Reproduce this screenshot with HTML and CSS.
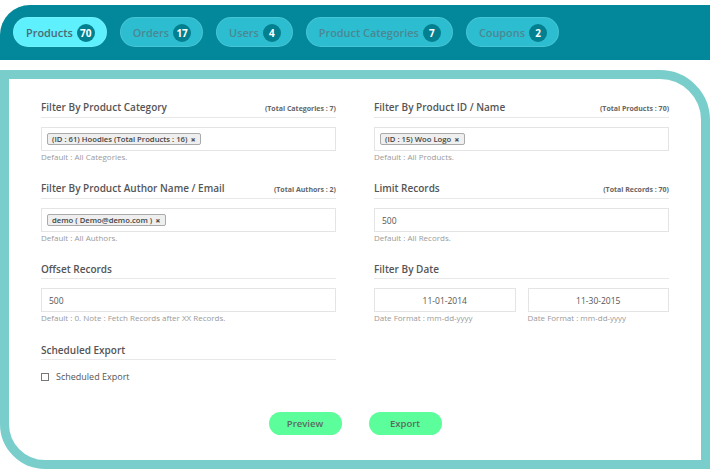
FILE: index.html
```html
<!DOCTYPE html>
<html>
<head>
<meta charset="utf-8">
<link rel="stylesheet" href="styles.css">
</head>
<body>
<div class="topbar">
  <div class="tab active">Products <span class="badge">70</span></div>
  <div class="tab">Orders <span class="badge">17</span></div>
  <div class="tab">Users <span class="badge">4</span></div>
  <div class="tab">Product Categories <span class="badge">7</span></div>
  <div class="tab">Coupons <span class="badge">2</span></div>
</div>
<div class="card">
  <div class="grid">
    <div class="section">
      <div class="title"><span>Filter By Product Category</span><span class="total">(Total Categories : 7)</span></div>
      <div class="input"><span class="tag">(ID : 61) Hoodies (Total Products : 16) <b>×</b></span></div>
      <div class="help">Default : All Categories.</div>
    </div>
    <div class="section">
      <div class="title"><span>Filter By Product ID / Name</span><span class="total">(Total Products : 70)</span></div>
      <div class="input"><span class="tag">(ID : 15) Woo Logo <b>×</b></span></div>
      <div class="help">Default : All Products.</div>
    </div>
    <div class="section">
      <div class="title"><span>Filter By Product Author Name / Email</span><span class="total">(Total Authors : 2)</span></div>
      <div class="input"><span class="tag">demo ( Demo@demo.com ) <b>×</b></span></div>
      <div class="help">Default : All Authors.</div>
    </div>
    <div class="section">
      <div class="title"><span>Limit Records</span><span class="total">(Total Records : 70)</span></div>
      <div class="input text">500</div>
      <div class="help">Default : All Records.</div>
    </div>
    <div class="section">
      <div class="title"><span>Offset Records</span></div>
      <div class="input text">500</div>
      <div class="help">Default : 0. Note : Fetch Records after XX Records.</div>
    </div>
    <div class="section">
      <div class="title"><span>Filter By Date</span></div>
      <div class="dates">
        <div>
          <div class="input text center">11-01-2014</div>
          <div class="help">Date Format : mm-dd-yyyy</div>
        </div>
        <div>
          <div class="input text center">11-30-2015</div>
          <div class="help">Date Format : mm-dd-yyyy</div>
        </div>
      </div>
    </div>
    <div class="section">
      <div class="title"><span>Scheduled Export</span></div>
      <label class="check"><span class="box"></span>Scheduled Export</label>
    </div>
  </div>
  <div class="buttons">
    <div class="btn">Preview</div>
    <div class="btn">Export</div>
  </div>
</div>
</body>
</html>
```
FILE: styles.css
```css
html, body {
  margin: 0;
  padding: 0;
  background: #fff;
}
body {
  width: 710px;
  height: 469px;
  overflow: hidden;
  font-family: "Open Sans", "DejaVu Sans", sans-serif;
  color: #555;
}
.topbar {
  margin-top: 5px;
  height: 55px;
  box-sizing: border-box;
  background: #02889a;
  border-top-left-radius: 30px;
  display: flex;
  align-items: flex-start;
  gap: 13px;
  padding: 12px 0 0 13px;
}
.tab {
  height: 30px;
  box-sizing: border-box;
  border-radius: 15px;
  background: #2dbdd1;
  border: 1px solid rgba(255,255,255,0.12);
  color: #4a8892;
  font-size: 10.9px;
  font-weight: 600;
  display: flex;
  align-items: center;
  gap: 4px;
  padding: 1px 11px 0 12px;
}
.tab.active {
  background: #5ef0fc;
  color: #4b6b74;
}
.badge {
  width: 18px;
  height: 18px;
  border-radius: 50%;
  background: #03808f;
  color: #fff;
  font-size: 10px;
  font-weight: 700;
  display: flex;
  align-items: center;
  justify-content: center;
}
.card {
  margin-top: 10px;
  height: 399px;
  box-sizing: border-box;
  border: 9px solid #79cecb;
  border-radius: 0 50px 0 45px;
  padding: 21px 32px 0 32px;
}
.grid {
  display: grid;
  grid-template-columns: 1fr 1fr;
  column-gap: 38px;
}
.section {
  height: 81px;
}
.title {
  display: flex;
  justify-content: space-between;
  align-items: baseline;
  font-size: 10px;
  font-weight: 600;
  color: #555;
  line-height: 15px;
  padding-bottom: 1px;
  border-bottom: 1px solid #e8e8e8;
  margin-bottom: 9px;
}
.total {
  font-size: 7px;
  font-weight: 700;
  color: #666;
}
.input {
  height: 24px;
  box-sizing: border-box;
  border: 1px solid #e4e4e4;
  padding: 0 5px;
  display: flex;
  align-items: center;
}
.input.text {
  font-size: 8.5px;
  color: #555;
  padding-left: 7px;
}
.input.center {
  justify-content: center;
  padding: 0;
}
.tag {
  height: 12px;
  box-sizing: border-box;
  border: 1px solid #aaa;
  background: #efefef;
  border-radius: 2px;
  font-size: 7.7px;
  font-weight: 600;
  color: #444;
  padding: 0 4px;
  display: inline-flex;
  align-items: center;
  gap: 3px;
}
.tag b {
  font-size: 9px;
  color: #555;
}
.help {
  font-size: 8px;
  color: #9a9a9a;
  line-height: 10px;
  margin-top: 1px;
}
.dates {
  display: grid;
  grid-template-columns: 1fr 1fr;
  column-gap: 12px;
}
.check {
  display: flex;
  align-items: center;
  gap: 7px;
  font-size: 9px;
  color: #555;
  margin-top: 10px;
}
.box {
  width: 8px;
  height: 8px;
  box-sizing: border-box;
  border: 1px solid #777;
  background: #fff;
}
.buttons {
  display: flex;
  justify-content: center;
  gap: 27px;
  margin-top: -12px;
}
.btn {
  width: 73px;
  height: 23px;
  border-radius: 12px;
  background: #5cfd9b;
  color: #5b6b62;
  font-size: 9.5px;
  font-weight: 600;
  display: flex;
  align-items: center;
  justify-content: center;
}
```
